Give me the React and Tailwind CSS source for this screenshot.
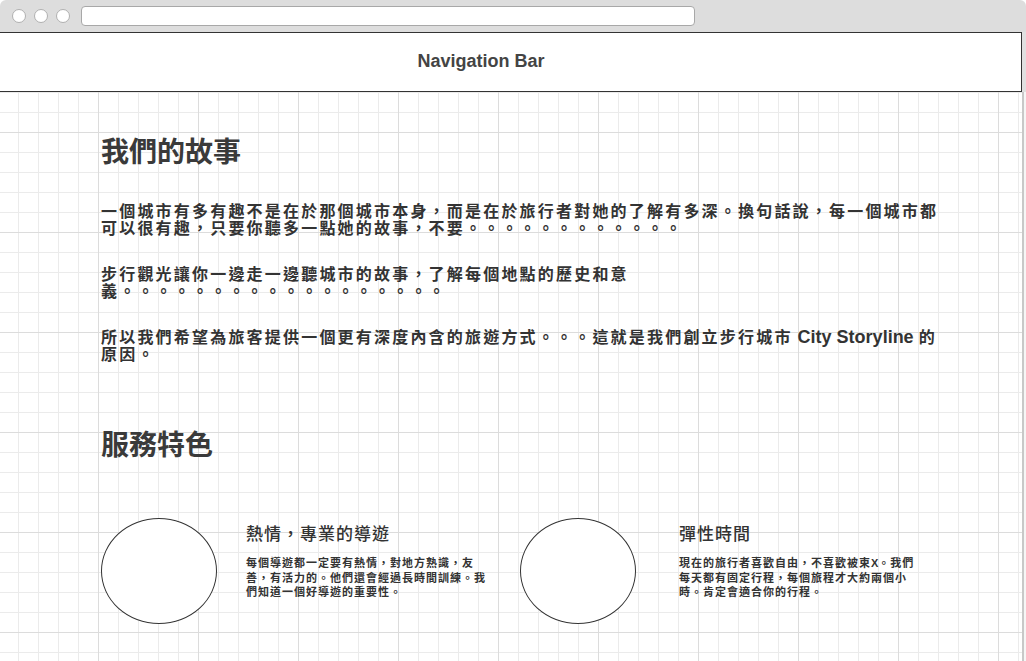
import React from "react";

const font = "font-['Liberation_Sans','Noto_Sans_CJK_TC',sans-serif]";

function Feature({ title, children, gap }) {
  return (
    <div className="flex items-start">
      <div className="h-[106px] w-[116px] shrink-0 rounded-[50%] border border-[#333] bg-white" />
      <div className={`${gap} mt-[8px] w-[245px]`}>
        <h3 className="text-[17px] leading-[18px] tracking-[1px] font-medium text-[#333]">{title}</h3>
        <p className="mt-[12px] text-[11px] leading-[14.5px] tracking-[1px] font-bold text-[#333]">
          {children}
        </p>
      </div>
    </div>
  );
}

export default function App() {
  return (
    <div className={`${font} flex h-[661px] w-[1026px] flex-col overflow-hidden bg-white`}>
      {/* browser chrome */}
      <div className="flex h-[32px] shrink-0 items-center rounded-t-[6px] bg-[#dddddd] pl-[12px]">
        <div className="h-[14px] w-[14px] rounded-full border border-[#b0b0b0] bg-white" />
        <div className="ml-[8px] h-[14px] w-[14px] rounded-full border border-[#b0b0b0] bg-white" />
        <div className="ml-[8px] h-[14px] w-[14px] rounded-full border border-[#b0b0b0] bg-white" />
        <div className="ml-[11px] h-[20px] w-[614px] rounded-[4px] border border-[#a8a8a8] bg-white" />
      </div>

      <div className="flex flex-1">
        <div className="flex w-[1022px] flex-col">
          <nav className="flex h-[60px] shrink-0 items-center justify-center border-y border-r border-[#333] bg-white pr-[59px] pb-[1px]">
            <span className="text-[18px] font-bold text-[#444]">Navigation Bar</span>
          </nav>

          <main className="flex-1 bg-[linear-gradient(to_right,#dcdcdc_1px,transparent_1px),linear-gradient(to_bottom,#dcdcdc_1px,transparent_1px),linear-gradient(to_right,#ebebeb_1px,transparent_1px),linear-gradient(to_bottom,#ebebeb_1px,transparent_1px)] bg-[size:100px_100px,100px_100px,20px_20px,20px_20px] bg-[position:98px_40px,98px_40px,18px_0px,18px_0px] pl-[101px] text-[#333]">
            <h1 className="pt-[47px] text-[28px] leading-[28px] font-semibold text-[#3a3a3a]">我們的故事</h1>

            <div className="mt-[36px] flex w-[845px] flex-col gap-[29px] text-[16px] leading-[17px] tracking-[2.2px] font-bold">
              <p>
                一個城市有多有趣不是在於那個城市本身，而是在於旅行者對她的了解有多深。換句話說，每一個城市都可以很有趣，只要你聽多一點她的故事，不要。。。。。。。。。。。。
              </p>
              <p>步行觀光讓你一邊走一邊聽城市的故事，了解每個地點的歷史和意義。。。。。。。。。。。。。。。。。。</p>
              <p>
                所以我們希望為旅客提供一個更有深度內含的旅遊方式。。。這就是我們創立步行城市<span className="text-[18px] leading-[17px] tracking-normal"> City Storyline </span>的原因。
              </p>
            </div>

            <h2 className="mt-[69px] text-[28px] leading-[28px] font-semibold text-[#3a3a3a]">服務特色</h2>

            <div className="mt-[58px] flex">
              <Feature title="熱情，專業的導遊" gap="ml-[29px]">
                每個導遊都一定要有熱情，對地方熟識，友善，有活力的。他們還會經過長時間訓練。我們知道一個好導遊的重要性。
              </Feature>
              <div className="ml-[29px]">
                <Feature title="彈性時間" gap="ml-[43px]">
                  現在的旅行者喜歡自由，不喜歡被束<span className="font-bold tracking-normal">X</span>。我們每天都有固定行程，每個旅程才大約兩個小時。肯定會適合你的行程。
                </Feature>
              </div>
            </div>
          </main>
        </div>

        <div className="flex w-[4px] flex-col">
          <div className="h-[60px] bg-[#e0e0e0]" />
          <div className="flex-1 border-l-2 border-[#c8c8c8] bg-[#f6f6f6]" />
        </div>
      </div>
    </div>
  );
}
